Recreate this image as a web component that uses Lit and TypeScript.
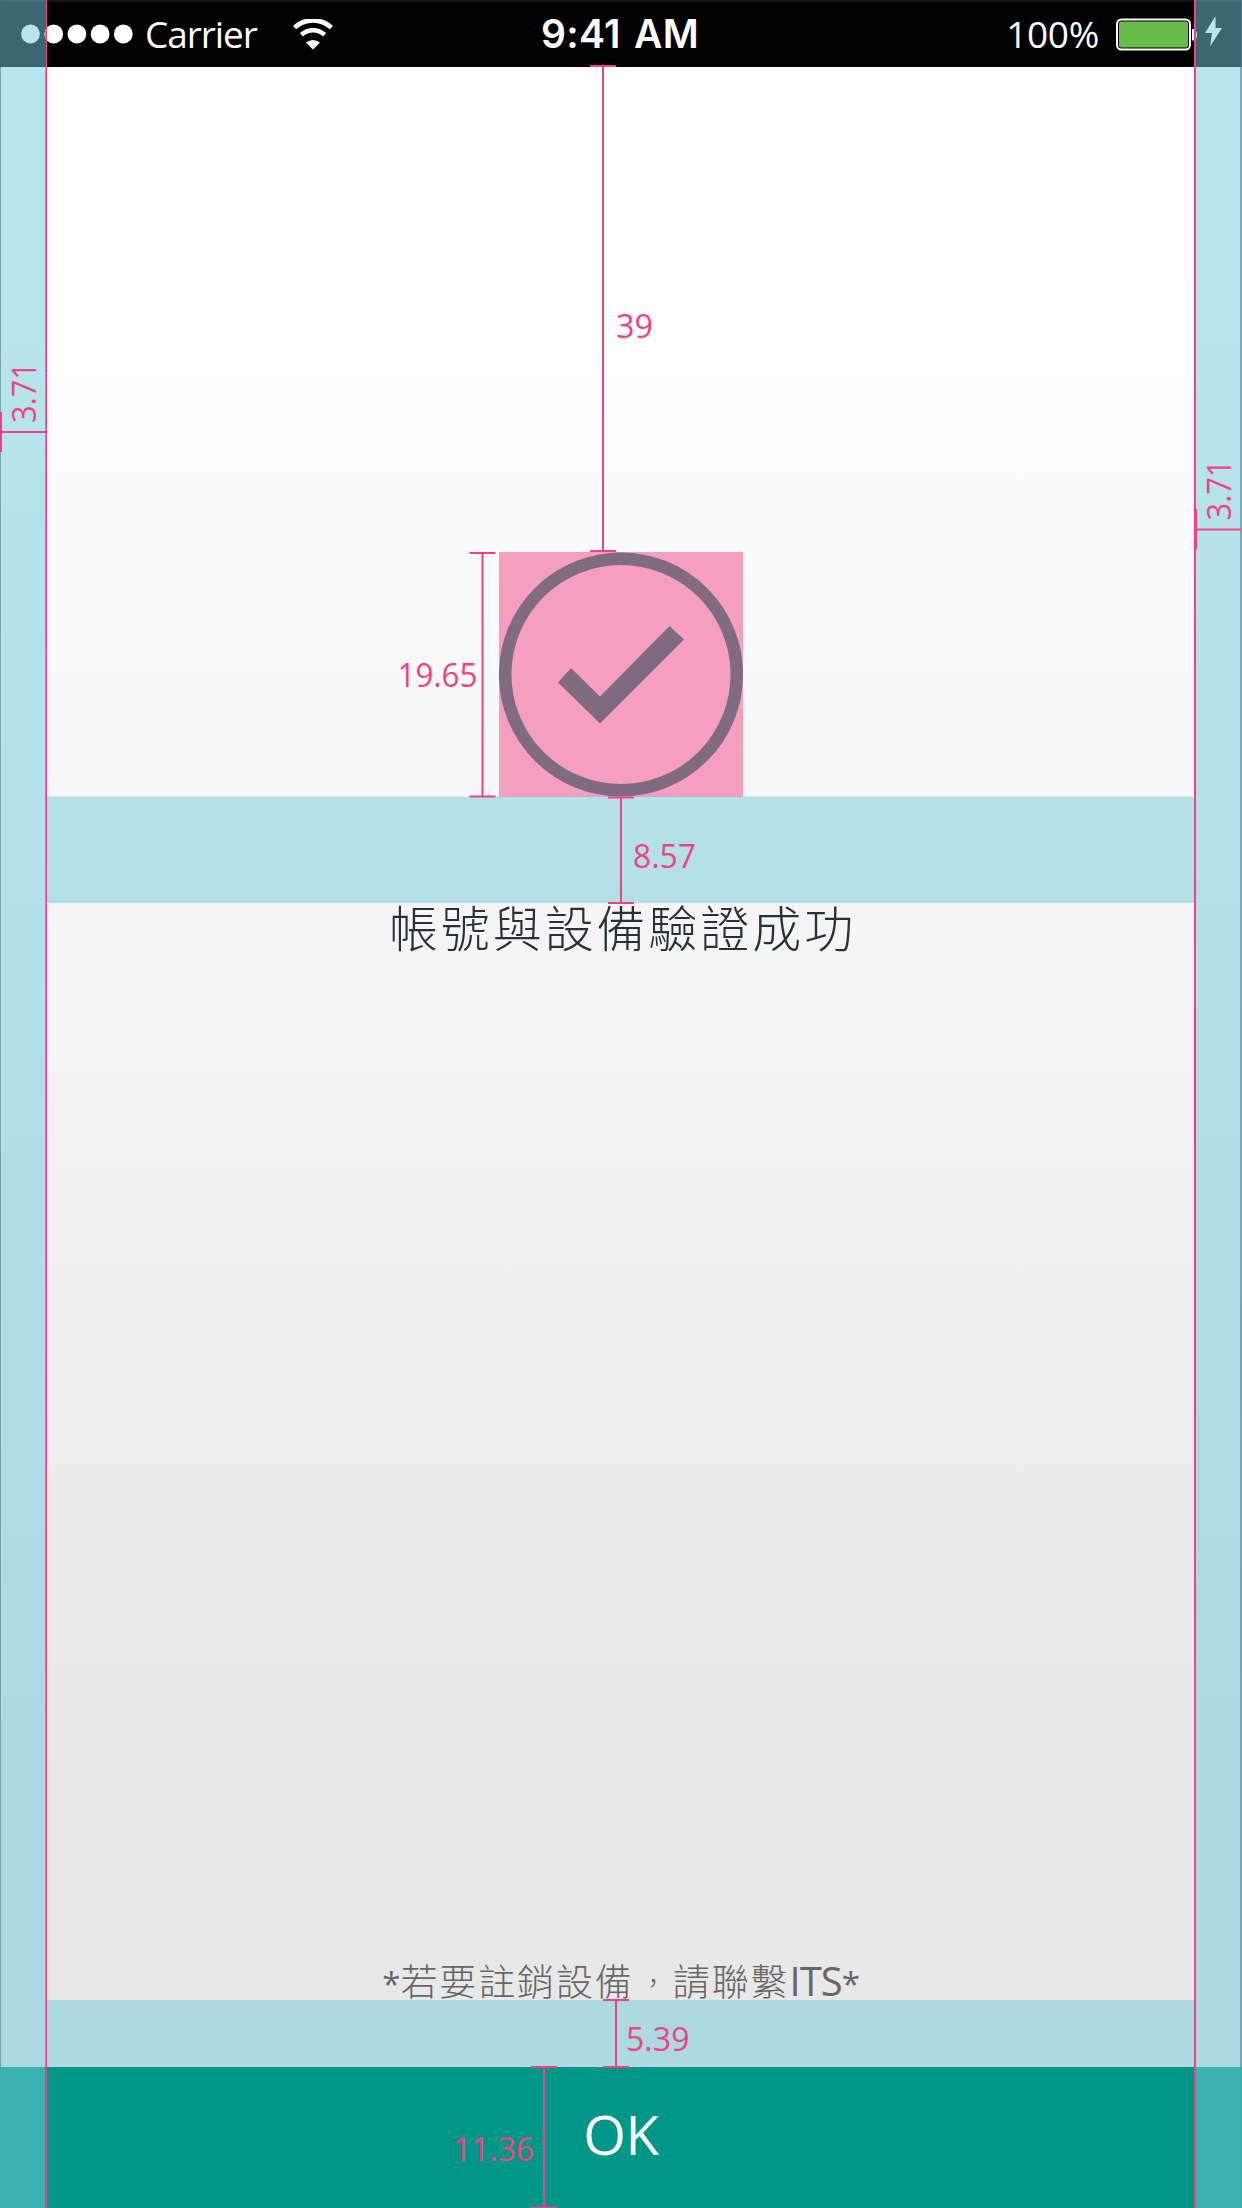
import { LitElement, html, css, svg } from "lit";
import { customElement } from "lit/decorators.js";

interface Measure { x: number; y1: number; y2: number; label: string; lx: number; ly: number; w: number; }

const MEASURES: Measure[] = [
  { x: 603, y1: 66, y2: 551, label: "39", lx: 616, ly: 337.5, w: 37 },
  { x: 482.5, y1: 553, y2: 796.5, label: "19.65", lx: 397.5, ly: 686.5, w: 80 },
  { x: 621, y1: 797.5, y2: 903, label: "8.57", lx: 633, ly: 867.5, w: 63 },
  { x: 616, y1: 2000, y2: 2067, label: "5.39", lx: 626, ly: 2050.5, w: 63.5 },
  { x: 544, y1: 2067, y2: 2207.5, label: "11.36", lx: 453, ly: 2160.5, w: 81 },
];

@customElement("status-bar")
class StatusBar extends LitElement {
  static styles = css`
    :host { display: grid; grid-template-columns: 1fr auto 1fr; align-items: center; box-sizing: border-box;
      height: 66.500px; padding: 0 20px 0 21px; background: #000; border-top: 2px solid #141414; color: #fff;
      font-family: "Open Sans", "Noto Sans", sans-serif; }
    .left, .right { display: flex; align-items: center; }
    .right { justify-content: flex-end; }
    .dots { width: 112px; height: 20px; }
    .label { font-size: 37px; line-height: 64px; }
    .carrier { margin-left: 12px; letter-spacing: -1.100px; }
    .percent { letter-spacing: -0.300px; }
    .wifi { width: 40px; height: 31px; margin-left: 36px; }
    .time { font: 600 39px/64px Inter, sans-serif; letter-spacing: 0.300px; word-spacing: 3px; padding-right: 3px; }
    .battery { width: 82px; height: 33px; margin-left: 17px; }
    .bolt { width: 17px; height: 31px; margin: 0 0 5px 7px; }
  `;
  render() {
    return html`
      <div class="left">
        <svg class="dots" viewBox="0 0 112 20" fill="#fff">
          ${[0, 1, 2, 3, 4].map((i) => svg`<circle cx=${9.5 + i * 23.2} cy="10" r="9.4"></circle>`)}
        </svg>
        <span class="label carrier">Carrier</span>
        <svg class="wifi" viewBox="0 0 40 31" fill="none" stroke="#fff" stroke-width="4.6">
          <path d="M1.6 8.6A27 27 0 0 1 38.4 8.6"></path>
          <path d="M8.4 15.8A17 17 0 0 1 31.6 15.8"></path>
          <path d="M20 30.5L13 23.6Q20 18.2 27 23.6Z" fill="#fff" stroke="none"></path>
        </svg>
      </div>
      <span class="time">9:41 AM</span>
      <div class="right">
        <span class="label percent">100%</span>
        <svg class="battery" viewBox="0 0 82 33">
          <rect x="1" y="1.5" width="73" height="30" rx="4.5" fill="none" stroke="#fff" stroke-width="2"></rect>
          <rect x="3" y="3.5" width="69" height="26" rx="2" fill="#67bb47"></rect>
          <path d="M76 11h1.5Q81 12 81 17T77.500 22.500H76Z" fill="#fff"></path>
        </svg>
        <svg class="bolt" viewBox="0 0 17 31"><path d="M10.500 0L0 17H7L5 30.500L17 12H10.500Z" fill="#fff"></path></svg>
      </div>`;
  }
}

@customElement("spacing-overlay")
class SpacingOverlay extends LitElement {
  static styles = css`
    :host { display: block; }
    .sheet { display: block; width: 1242px; height: 2208px; }
    .tint { fill: rgb(115, 204, 219); fill-opacity: 0.51; }
    .edge { fill: #356b78; fill-opacity: 0.5; }
    .pink { fill: #ef447f; }
    .line { stroke: #ef447f; stroke-width: 2; fill: none; }
    .num { fill: #ef447f; font: 33px "Open Sans", "Noto Sans", sans-serif; }
  `;
  render() {
    return html`<svg class="sheet" viewBox="0 0 1242 2208">
      <rect class="tint" x="0" y="0" width="46" height="2208"></rect>
      <rect class="tint" x="1195" y="0" width="47" height="2208"></rect>
      <rect class="tint" x="47" y="796.500" width="1147" height="106.500"></rect>
      <rect class="tint" x="47" y="2000" width="1147" height="67"></rect>
      <rect class="edge" x="0" y="0" width="1" height="2067"></rect>
      <rect class="edge" x="45" y="0" width="1" height="2208"></rect>
      <rect class="edge" x="1240" y="0" width="1" height="2067"></rect>
      <rect class="pink" x="46" y="0" width="1" height="2208"></rect>
      <rect class="pink" x="1194" y="0" width="2" height="2208"></rect>
      <rect class="pink" x="1241" y="0" width="1" height="2208" fill-opacity="0.6"></rect>
      ${MEASURES.map((m) => svg`
        <path class="line" d="M${m.x} ${m.y1}V${m.y2}M${m.x - 13} ${m.y1}h26M${m.x - 13} ${m.y2}h26"></path>
        <text class="num" x=${m.lx} y=${m.ly} textLength=${m.w} lengthAdjust="spacingAndGlyphs">${m.label}</text>`)}
      <path class="line" d="M1 412V452M0 432H47M1196 509V549.500M1195 529.500H1241"></path>
      <text class="num" transform="translate(36 423) rotate(-90)" textLength="61" lengthAdjust="spacingAndGlyphs">3.71</text>
      <text class="num" transform="translate(1231 520.500) rotate(-90)" textLength="61" lengthAdjust="spacingAndGlyphs">3.71</text>
    </svg>`;
  }
}

@customElement("app-root")
class AppRoot extends LitElement {
  static styles = css`
    :host { display: block; position: relative; width: 1242px; height: 2208px; overflow: hidden; }
    .screen { display: flex; flex-direction: column; height: 100%;
      background: linear-gradient(#fff 267px, #e8e8e8 1785px); }
    .body { flex: 1; display: flex; flex-direction: column; align-items: center; padding-top: 485.500px;
      font-family: "Noto Sans CJK TC", sans-serif; font-weight: 300; }
    .icon { width: 244px; height: 245px; background: #f49fbd; }
    .title { margin: 103px 0 0; font-size: 49px; line-height: 52px; letter-spacing: 2.9px; font-weight: 300;
      color: #263238; padding-left: 3px; }
    .note { margin: auto 0 67px; font-size: 37px; line-height: 40px; letter-spacing: 1.900px; color: #666; white-space: nowrap; }
    .latin { font: 400 40px/30px "Open Sans", "Noto Sans", sans-serif; letter-spacing: -1px; }
    .star { font: 400 33px/30px "Open Sans", "Noto Sans", sans-serif; letter-spacing: 0; }
    .comma { display: inline-block; width: 39px; text-align: center; font-size: 26px; line-height: 20px;
      letter-spacing: 0; vertical-align: 3px; }
    .ok { display: flex; align-items: center; justify-content: center; height: 141px; border: 0; padding: 0 0 9px;
      background: #009688; color: #fff; font: 55px "Open Sans", "Noto Sans", sans-serif; letter-spacing: -0.500px; }
    .overlay { position: absolute; inset: 0; pointer-events: none; }
  `;
  render() {
    return html`
      <div class="screen">
        <status-bar></status-bar>
        <main class="body">
          <svg class="icon" viewBox="0 0 244 245">
            <circle cx="122" cy="122.500" r="115.800" fill="none" stroke="#806b81" stroke-width="12.500"></circle>
            <path d="M59 130.500L72 116L101 144.500L170.500 74L185 87.500L101 171.500Z" fill="#806b81"></path>
          </svg>
          <h1 class="title">帳號與設備驗證成功</h1>
          <p class="note"><span class="star">*</span>若要註銷設備<span class="comma">，</span>請聯繫<span class="latin">ITS</span><span class="star">*</span></p>
        </main>
        <button class="ok">OK</button>
      </div>
      <spacing-overlay class="overlay"></spacing-overlay>`;
  }
}
